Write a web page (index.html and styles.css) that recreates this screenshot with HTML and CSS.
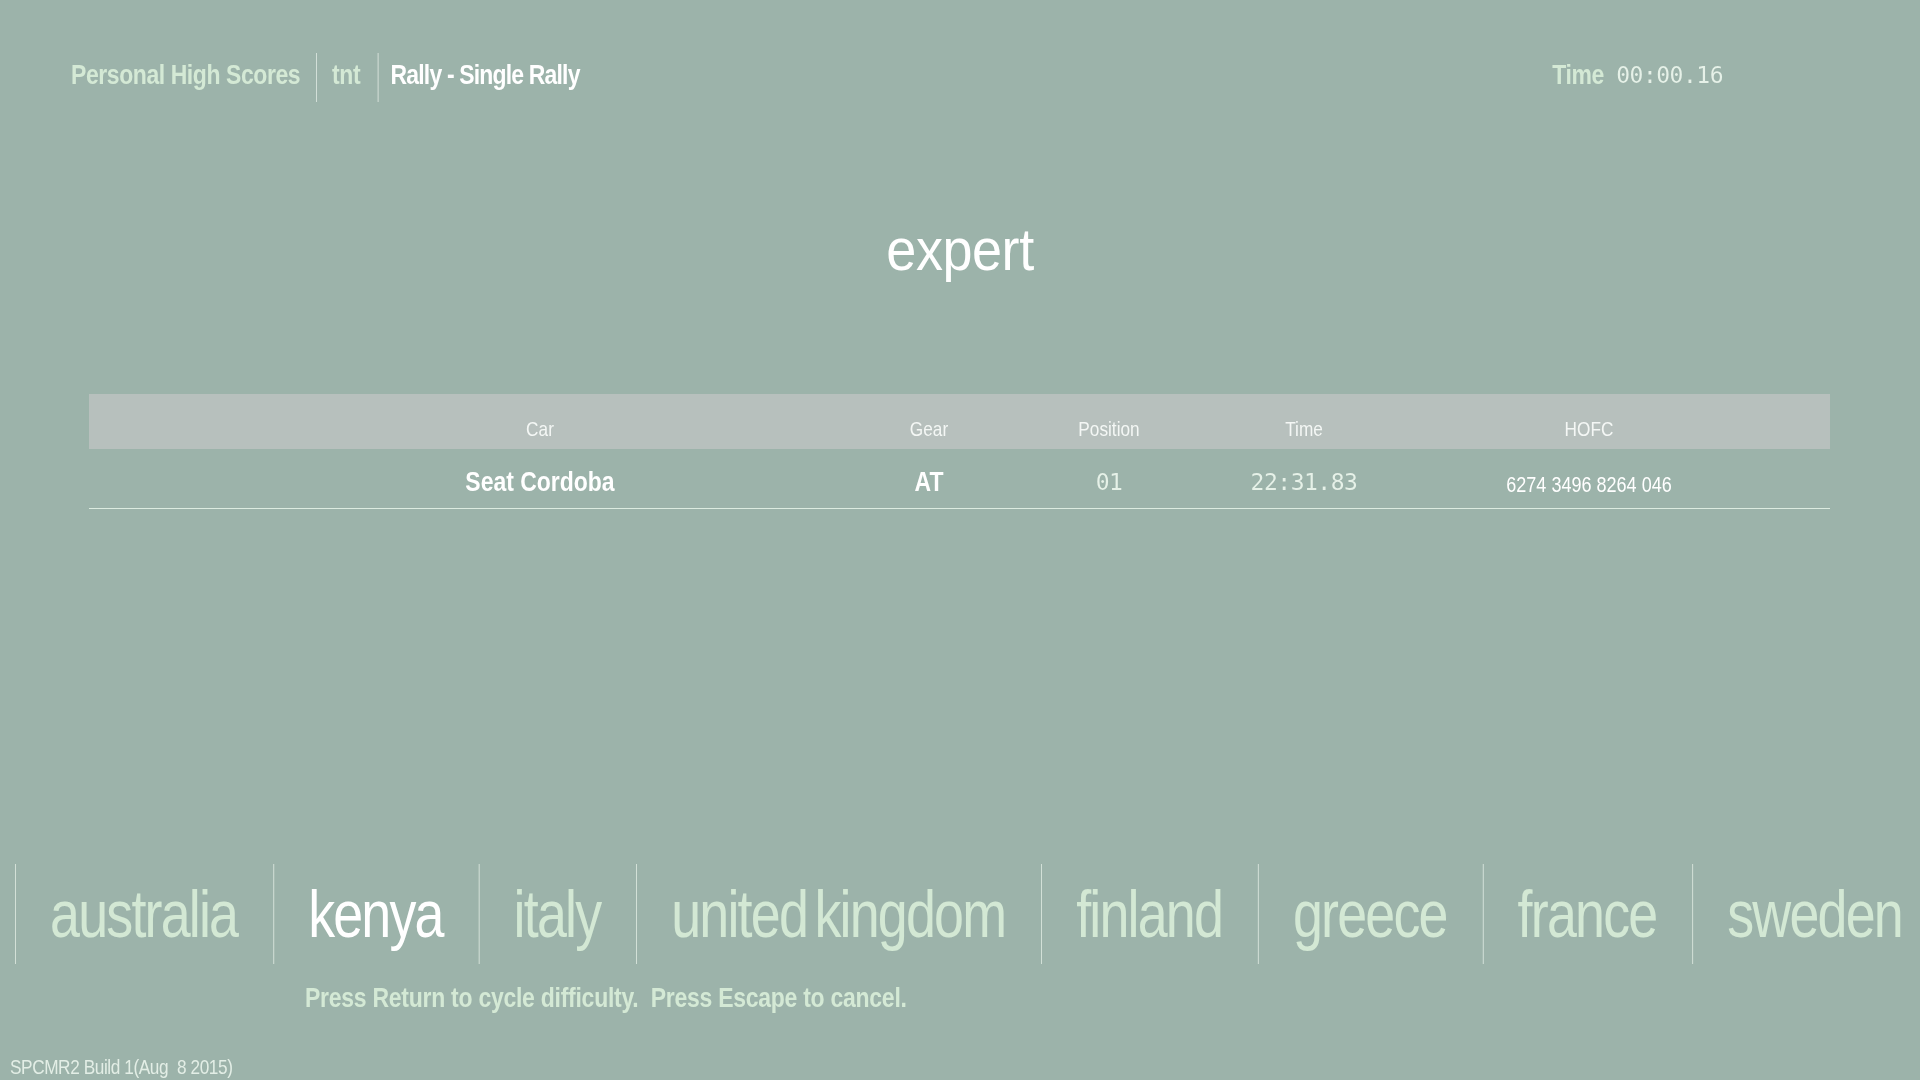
FILE: index.html
```html
<!DOCTYPE html>
<html lang="en">
<head>
<meta charset="utf-8">
<title>Personal High Scores</title>
<link rel="stylesheet" href="styles.css">
</head>
<body>
<div class="screen">
  <header class="topbar">
    <div class="crumbs">
      <span class="crumb dim">Personal High Scores</span>
      <span class="crumb dim">tnt</span>
      <span class="crumb active">Rally - Single Rally</span>
    </div>
    <div class="clock">
      <span class="clock-label">Time</span>
      <span class="lcd clock-value">00:00.16</span>
    </div>
  </header>

  <h1 class="difficulty">expert</h1>

  <section class="scores">
    <div class="scores-head">
      <span class="cell squeeze">Car</span>
      <span class="cell squeeze">Gear</span>
      <span class="cell squeeze">Position</span>
      <span class="cell squeeze">Time</span>
      <span class="cell squeeze">HOFC</span>
    </div>
    <div class="scores-row">
      <span class="cell squeeze strong">Seat Cordoba</span>
      <span class="cell squeeze strong">AT</span>
      <span class="cell lcd lcd-row">01</span>
      <span class="cell lcd lcd-row">22:31.83</span>
      <span class="cell squeeze code">6274 3496 8264 046</span>
    </div>
  </section>

  <footer class="bottom">
    <nav class="countries">
      <span class="country">australia</span>
      <span class="country current">kenya</span>
      <span class="country">italy</span>
      <span class="country">united kingdom</span>
      <span class="country">finland</span>
      <span class="country">greece</span>
      <span class="country">france</span>
      <span class="country">sweden</span>
    </nav>
    <p class="hint">Press Return to cycle difficulty.&nbsp; Press Escape to cancel.</p>
    <div class="build">SPCMR2 Build 1(Aug&nbsp; 8 2015)</div>
  </footer>
</div>
</body>
</html>
```

FILE: styles.css
```css
html, body {
  margin: 0;
  padding: 0;
}

body {
  background: #9cb3aa;
  font-family: "Liberation Sans", Arial, sans-serif;
  color: #ffffff;
}

.screen {
  width: 1920px;
  height: 1080px;
  display: flex;
  flex-direction: column;
  overflow: hidden;
}

/* The game font is a horizontally squeezed Helvetica */
.squeeze {
  transform: scaleX(0.82);
}

/* ---------- top bar ---------- */
.topbar {
  display: flex;
  justify-content: space-between;
  align-items: flex-start;
  padding: 53px 197px 0 71px;
}

.crumbs {
  display: flex;
  height: 49px;
  transform: scaleX(0.82);
  transform-origin: left center;
}

.crumb {
  font-size: 28px;
  font-weight: bold;
  letter-spacing: -0.5px;
  padding: 0 20px 5px 17px;
  line-height: 44px;
}

.crumb:first-child {
  padding-left: 0;
}

.crumb:nth-child(2) {
  padding-left: 18px;
  padding-right: 21px;
}

.crumb:last-child {
  padding-left: 15px;
  padding-right: 0;
  letter-spacing: -1px;
}

.crumb + .crumb {
  border-left: 1px solid #dfeae2;
}

.dim {
  color: #d4e9d5;
}

.active {
  color: #ffffff;
}

.clock {
  display: flex;
  align-items: center;
  gap: 12px;
  height: 44px;
}

.clock-label {
  display: inline-block;
  font-size: 28px;
  font-weight: bold;
  color: #d4e9d5;
  letter-spacing: -0.5px;
  transform: scaleX(0.82);
  transform-origin: right center;
}

.lcd {
  font-family: "DejaVu Sans Mono", "Liberation Mono", monospace;
  font-variant-numeric: slashed-zero;
  color: transparent;
  background-image: radial-gradient(circle, #e6f1e8 0.95px, transparent 1.25px);
  background-size: 2px 2px;
  -webkit-background-clip: text;
  background-clip: text;
}

.clock-value {
  font-size: 23px;
  letter-spacing: -0.5px;
}

/* ---------- title ---------- */
.difficulty {
  margin: 118px 0 0;
  text-align: center;
  font-size: 60px;
  font-weight: normal;
  line-height: 60px;
  letter-spacing: -0.5px;
  color: #ffffff;
  transform: scaleX(0.9);
}

/* ---------- table ---------- */
.scores {
  margin: 114px 90px 0 89px;
}

.scores-head,
.scores-row {
  display: grid;
  grid-template-columns: 598px 180px 180px 210px 360px;
  padding-left: 152px;
}

.cell {
  text-align: center;
  white-space: nowrap;
}

.scores-head {
  background: #b7c0bd;
  padding-top: 25px;
  padding-bottom: 10px;
  font-size: 21px;
  line-height: 20px;
  color: #f4f7f5;
}

.scores-row {
  padding-top: 18px;
  padding-bottom: 8px;
  line-height: 30px;
  border-bottom: 1px solid #dcebe0;
}

.strong {
  font-size: 28px;
  font-weight: bold;
}

.lcd-row {
  font-size: 23px;
  letter-spacing: -0.5px;
}

.code {
  font-size: 22px;
  padding-top: 3px;
}

/* ---------- bottom ---------- */
.bottom {
  margin-top: auto;
  padding-bottom: 3px;
}

.countries {
  display: flex;
  margin-left: 15px;
  white-space: nowrap;
  transform: scaleX(0.815);
  transform-origin: left center;
}

.country {
  flex: none;
  padding: 0 44px 0 42px;
  border-left: 1px solid #dfeae2;
  font-size: 66px;
  line-height: 100px;
  letter-spacing: -2.2px;
  word-spacing: -7px;
  color: #d3e8d4;
}

.country.current {
  color: #ffffff;
}

.hint {
  margin: 21px 0 0 305px;
  font-size: 28px;
  font-weight: bold;
  line-height: 26px;
  letter-spacing: -0.3px;
  color: #d4e9d5;
  transform: scaleX(0.82);
  transform-origin: left center;
}

.build {
  margin: 46px 0 0 10px;
  font-size: 21px;
  line-height: 20px;
  letter-spacing: -0.5px;
  color: #e3eee6;
  transform: scaleX(0.82);
  transform-origin: left center;
}
```
